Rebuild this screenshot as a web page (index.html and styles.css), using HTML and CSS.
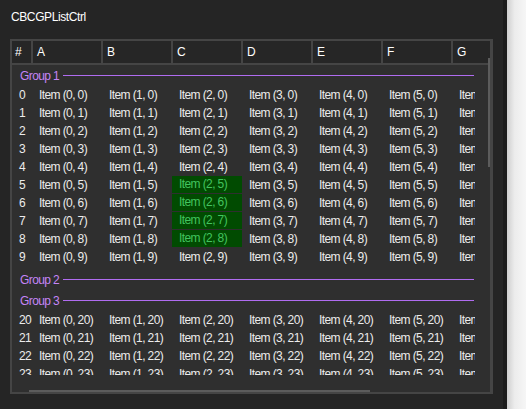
FILE: index.html
```html
<!DOCTYPE html>
<html lang="en">
<head>
  <meta charset="UTF-8">
  <title>CBCGPListCtrl</title>
  <link rel="stylesheet" href="styles.css">
</head>
<body>

  <div class="app">
    <div class="title">CBCGPListCtrl</div>

    <div class="list">
      <div class="head">
        <div class="hcell num">#</div>
        <div class="hcell">A</div>
        <div class="hcell">B</div>
        <div class="hcell">C</div>
        <div class="hcell">D</div>
        <div class="hcell">E</div>
        <div class="hcell">F</div>
        <div class="hcell last">G</div>
      </div>

      <div class="view" id="view"></div>

      <div class="hbar"><div class="hthumb"></div></div>
      <div class="vthumb"></div>
    </div>
  </div>

  <div class="edge"></div>
  <div class="desk"></div>

  <script src="script.js"></script>

</body>
</html>
```

FILE: styles.css
```css
body {
  margin: 0;
  display: flex;
  height: 409px;
  overflow: hidden;
  background-color: #252525;
  color: #ececec;
  font-family: "Liberation Sans", Arial, sans-serif;
  font-size: 12px;
  letter-spacing: -0.6px;
}

.app {
  width: 503px;
  background-color: #252525;
}

.edge {
  width: 4px;
  background-color: #1c1c1c;
}

.desk {
  flex: 1;
  background: linear-gradient(to right, #cfcfcf, #ececec 40%, #f6f6f6);
}

.title {
  padding: 10px 0 0 11px;
  line-height: 14px;
  height: 14px;
  margin-bottom: 15px;
  color: #fff;
  letter-spacing: -0.4px;
}

.list {
  position: relative;
  margin-left: 10px;
  width: 483px;
  border: 2px solid #454545;
  border-right-width: 3px;
  box-sizing: border-box;
  background-color: #2f2f2f;
}

.head {
  display: grid;
  grid-template-columns: 21px repeat(6, 70px) 1fr;
  height: 24px;
  background-color: #262626;
  border-bottom: 2px solid #454545;
  box-sizing: border-box;
}

.hcell {
  border-right: 2px solid #454545;
  padding: 4px 0 0 4px;
  line-height: 14px;
  color: #fff;
}

.hcell.num {
  padding-left: 3px;
}

.hcell.last {
  border-right: none;
}

.view {
  width: 463px;
  height: 310px;
  overflow: hidden;
}

.row {
  display: grid;
  grid-template-columns: 20px repeat(7, 70px);
  height: 18px;
  line-height: 18px;
  white-space: nowrap;
}

.cell {
  padding-left: 7px;
  overflow: hidden;
}

.cell.hl {
  background-color: #014b01;
  background-clip: padding-box;
  border-bottom: 1px solid transparent;
  line-height: 17px;
  color: #42c45f;
}

.group {
  display: flex;
  align-items: center;
  height: 21px;
  padding-left: 8px;
  color: #c585f7;
}

.group.gap {
  margin-top: 3px;
}

.group i {
  flex: 1;
  height: 1px;
  margin: 0 1px 0 4px;
  background-color: #b06cf0;
}

.hbar {
  height: 17px;
  position: relative;
}

.hthumb {
  position: absolute;
  left: 17px;
  bottom: 0;
  width: 341px;
  height: 2px;
  background-color: #5c5c5c;
}

.vthumb {
  position: absolute;
  left: 476px;
  top: 17px;
  width: 2px;
  height: 109px;
  background-color: #5c5c5c;
}
```

FILE: script.js
```js
const view = document.getElementById('view');

// linhas por grupo
const groups = [
  { name: 'Group 1', rows: [0, 1, 2, 3, 4, 5, 6, 7, 8, 9] },
  { name: 'Group 2', rows: [] },
  { name: 'Group 3', rows: [20, 21, 22, 23] }
];

function isHighlighted(row, col) {
  return col === 2 && row >= 5 && row <= 8;
}

groups.forEach((g, gi) => {
  const head = document.createElement('div');
  head.className = gi === 1 ? 'group gap' : 'group';
  head.innerHTML = '<span>' + g.name + '</span><i></i>';
  view.appendChild(head);

  g.rows.forEach(r => {
    const row = document.createElement('div');
    row.className = 'row';
    let html = '<div class="cell num">' + r + '</div>';
    for (let c = 0; c < 7; c++) {
      const cls = isHighlighted(r, c) ? 'cell hl' : 'cell';
      html += '<div class="' + cls + '">Item (' + c + ', ' + r + ')</div>';
    }
    row.innerHTML = html;
    view.appendChild(row);
  });
});
```
